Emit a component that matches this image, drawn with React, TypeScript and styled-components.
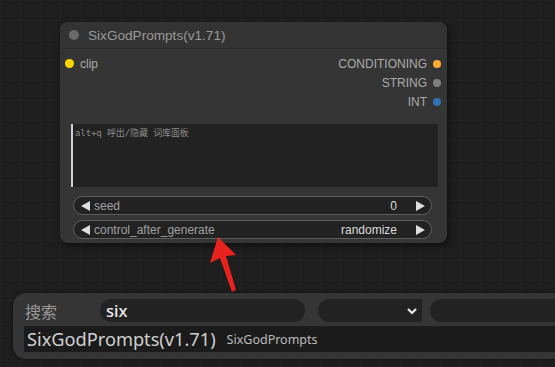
import React from "react";
import styled, { createGlobalStyle } from "styled-components";

const Global = createGlobalStyle`
  html, body { margin: 0; padding: 0; background: #1d1d1d; }
  body { width: 555px; height: 367px; overflow: hidden; }
`;

const Canvas = styled.div`
  position: relative;
  width: 555px;
  height: 367px;
  overflow: hidden;
  background-color: #1e1e1e;
  background-image:
    linear-gradient(to right, rgba(255,255,255,0.025) 1px, transparent 1px),
    linear-gradient(to bottom, rgba(255,255,255,0.02) 1px, transparent 1px);
  background-size: 20px 20px, 20px 20px;
  font-family: "Liberation Sans", Arial, sans-serif;
`;

const Node = styled.div`
  position: absolute;
  left: 60px;
  top: 22px;
  width: 387px;
  height: 221px;
  background: #353535;
  border-radius: 8px;
  box-shadow: 2px 3px 6px rgba(0, 0, 0, 0.5);
  display: flex;
  flex-direction: column;
`;

const Title = styled.div`
  height: 26px;
  display: flex;
  align-items: center;
  gap: 9px;
  padding-left: 9px;
  background: #333333;
  border-radius: 8px 8px 0 0;
  border-bottom: 1px solid #2e2e2e;
  color: #999;
  font-size: 13.6px;
`;

const Dot = styled.span<{ $c: string; $size?: number }>`
  width: ${(p) => p.$size ?? 8}px;
  height: ${(p) => p.$size ?? 8}px;
  border-radius: 50%;
  background: ${(p) => p.$c};
  flex: none;
`;

const Slots = styled.div`
  display: flex;
  justify-content: space-between;
  padding: 5px 6px 0 5px;
  height: 66px;
  box-sizing: border-box;
`;

const SlotCol = styled.div<{ $right?: boolean }>`
  display: flex;
  flex-direction: column;
  align-items: ${(p) => (p.$right ? "flex-end" : "flex-start")};
`;

const Slot = styled.div`
  height: 19px;
  display: flex;
  align-items: center;
  gap: 6px;
  font-size: 12px;
  color: #aaa;
`;

const TextArea = styled.div`
  margin: 9px 9px 0 11px;
  height: 63px;
  background: #222222;
  border-left: 2px solid #cfcfcf;
  box-sizing: border-box;
  padding: 2px 2px;
  font-family: "DejaVu Sans Mono", "Noto Sans CJK SC", monospace;
  font-size: 9px;
  color: #8a8a8a;
  letter-spacing: -0.1px;
`;

const Widgets = styled.div`
  display: flex;
  flex-direction: column;
  gap: 5px;
  margin: 9px 15px 0 13px;
`;

const Widget = styled.div`
  height: 19px;
  box-sizing: border-box;
  border: 1px solid #5e5e5e;
  border-radius: 10px;
  background: #222222;
  display: flex;
  align-items: center;
  padding: 0 6px 0 7px;
  font-size: 12px;
`;

const Arrow = styled.span<{ $dir: "l" | "r" }>`
  width: 0;
  height: 0;
  border-top: 5px solid transparent;
  border-bottom: 5px solid transparent;
  ${(p) =>
    p.$dir === "l"
      ? "border-right: 9px solid #dddddd; margin-right: 4px;"
      : "border-left: 9px solid #dddddd; margin-left: 19px;"}
`;

const WLabel = styled.span`
  color: #a0a0a0;
  flex: 1;
`;

const WValue = styled.span`
  color: #dddddd;
`;

const Search = styled.div`
  position: absolute;
  left: 13px;
  top: 293px;
  width: 560px;
  height: 66px;
  background: #353535;
  border-radius: 13px 0 0 13px;
  box-shadow: 0 0 4px rgba(0, 0, 0, 0.5);
  padding: 6px 0 0 11px;
  box-sizing: border-box;
  display: flex;
  flex-direction: column;
  gap: 4px;
  font-family: "Noto Sans", "Noto Sans CJK SC", sans-serif;
`;

const SearchRow = styled.div`
  display: flex;
  align-items: center;
  height: 23px;
`;

const SearchLabel = styled.span`
  width: 76px;
  flex: none;
  font-size: 16px;
  color: #9a9a9a;
  font-family: "Noto Sans CJK SC", sans-serif;
  padding-left: 1px;
  box-sizing: border-box;
  white-space: nowrap;
`;

const Input = styled.div<{ $w: number }>`
  width: ${(p) => p.$w}px;
  height: 23px;
  background: #222222;
  border-radius: 12px;
  display: flex;
  align-items: center;
  padding-left: 6px;
  box-sizing: border-box;
  color: #ececec;
  font-size: 16.5px;
  font-weight: 500;
  margin-right: 13px;
  flex: none;
`;

const Select = styled.div`
  width: 104px;
  height: 23px;
  background: #222222;
  border-radius: 12px 0 0 12px;
  display: flex;
  align-items: center;
  justify-content: flex-end;
  padding-right: 4px;
  box-sizing: border-box;
  margin-right: 8px;
  flex: none;
`;

const Result = styled.div`
  height: 26px;
  background: #1b1b1b;
  display: flex;
  align-items: center;
  gap: 11px;
  padding-left: 3px;
`;

const ResultMain = styled.span`
  font-size: 18.2px;
  color: #d0d0d0;
  white-space: nowrap;
`;

const ResultSub = styled.span`
  font-size: 12.5px;
  color: #bcbcbc;
  white-space: nowrap;
`;

const Overlay = styled.svg`
  position: absolute;
  left: 0;
  top: 0;
  pointer-events: none;
`;

export default function App() {
  return (
    <>
      <Global />
      <Canvas>
        <Node>
          <Title>
            <Dot $c="#6a6a6a" $size={10} />
            <span>SixGodPrompts(v1.71)</span>
          </Title>
          <Slots>
            <SlotCol>
              <Slot>
                <Dot $c="#ffd500" $size={9} />
                <span>clip</span>
              </Slot>
            </SlotCol>
            <SlotCol $right>
              <Slot>
                <span>CONDITIONING</span>
                <Dot $c="#ffa931" $size={8} />
              </Slot>
              <Slot>
                <span>STRING</span>
                <Dot $c="#808080" $size={8} />
              </Slot>
              <Slot>
                <span>INT</span>
                <Dot $c="#2f72b5" $size={8} />
              </Slot>
            </SlotCol>
          </Slots>
          <TextArea>alt+q 呼出/隐藏 词库面板</TextArea>
          <Widgets>
            <Widget>
              <Arrow $dir="l" />
              <WLabel>seed</WLabel>
              <WValue>0</WValue>
              <Arrow $dir="r" />
            </Widget>
            <Widget>
              <Arrow $dir="l" />
              <WLabel>control_after_generate</WLabel>
              <WValue>randomize</WValue>
              <Arrow $dir="r" />
            </Widget>
          </Widgets>
        </Node>

        <Overlay width="555" height="367" viewBox="0 0 555 367">
          <polygon
            points="218,237 210,263 220,258 232,292 236,290 226,256 236,255"
            fill="#e8231d"
          />
        </Overlay>

        <Search>
          <SearchRow>
            <SearchLabel>搜索</SearchLabel>
            <Input $w={205}>six</Input>
            <Select>
              <svg width="12" height="10" viewBox="0 0 12 10">
                <path d="M2 3 L6 7 L10 3" stroke="#e8e8e8" strokeWidth="2.2" fill="none" />
              </svg>
            </Select>
            <Input $w={200} />
          </SearchRow>
          <Result>
            <ResultMain>SixGodPrompts(v1.71)</ResultMain>
            <ResultSub>SixGodPrompts</ResultSub>
          </Result>
        </Search>
      </Canvas>
    </>
  );
}
